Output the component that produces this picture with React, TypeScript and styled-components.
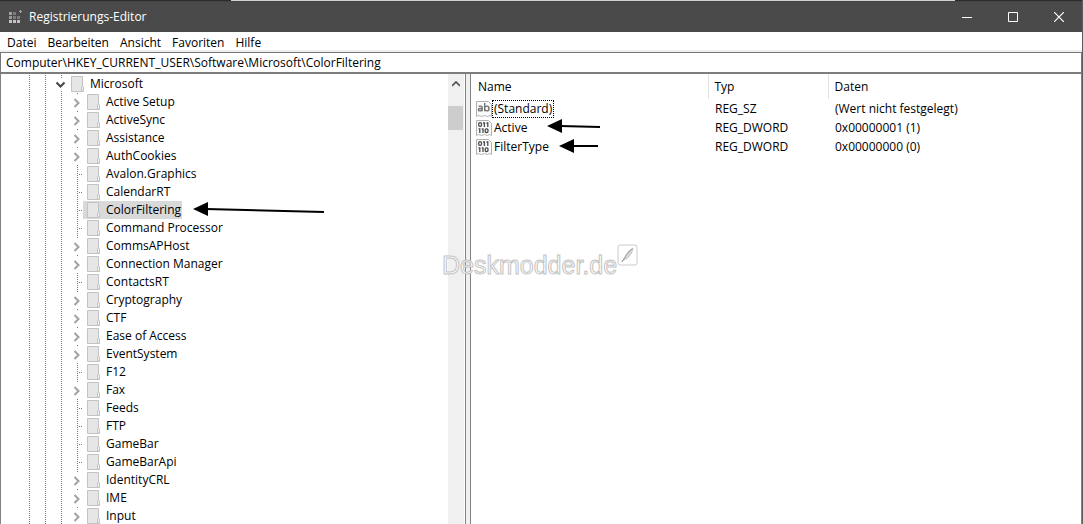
import React from 'react';
import styled, { createGlobalStyle, css } from 'styled-components';

const GlobalStyle = createGlobalStyle`
  * { box-sizing: border-box; }
  body { margin: 0; background: #fff; color: #000; font: 12px/18px "Open Sans", "Noto Sans", sans-serif; }
  button, input { font: inherit; color: inherit; }
  button { padding: 0; border: 0; background: none; }
`;

const Window = styled.div`
  position: relative;
  display: flex;
  flex-direction: column;
  height: 100vh;
  overflow: hidden;
  border-right: 1px solid #5c5c5c;
`;

const Backdrop = styled.div`
  flex: none;
  display: flex;
  height: 1px;
  background: #2b2b2b;
  &::before { content: ''; width: 231px; }
  &::after { content: ''; flex: 1; margin-right: 127px; background: #cfd3d1; }
`;

const TitleBar = styled.header`
  flex: none;
  display: flex;
  align-items: center;
  height: 31px;
  padding-left: 8px;
  border-top: 1px solid #444;
  background: #4a4a4a;
  color: #fff;
`;

const Title = styled.h1`
  flex: 1;
  margin: 0 0 0 7px;
  font-size: 12px;
  font-weight: 400;
`;

const CaptionButton = styled.button`
  display: flex;
  align-items: center;
  justify-content: center;
  width: 46px;
  height: 30px;
`;

const MenuBar = styled.nav`
  flex: none;
  display: flex;
  align-items: flex-end;
  gap: 11px;
  height: 20px;
  padding-left: 7px;
  background: linear-gradient(#fff 18px, #f0f0f0 18px);
`;

const AddressInput = styled.input`
  flex: none;
  width: 100%;
  height: 22px;
  padding: 0 5px;
  border: 1px solid #777;
  border-bottom: 2px solid #7d7d7d;
  outline: 0;
`;

const Panes = styled.main`
  flex: 1;
  display: flex;
  min-height: 0;
  border-left: 1px solid #828282;
  border-right: 1px solid #828282;
`;

const TreePane = styled.section`
  flex: none;
  display: flex;
  width: 465px;
  overflow: hidden;
  border-right: 1px solid #828282;
`;

const Tree = styled.ul`
  flex: 1;
  margin: 0;
  padding: 1px 0 0;
  list-style: none;
`;

const TreeRow = styled.li`
  display: flex;
  height: 18px;
`;

const Guides = styled.svg`
  flex: none;
  display: block;
`;

const NodeLabel = styled.button<{ $selected?: boolean }>`
  display: flex;
  align-items: center;
  gap: 6px;
  height: 18px;
  padding: 0 1px 0 4px;
  ${p => p.$selected && css`background: #d9d9d9;`}
`;

const ScrollBar = styled.div`
  flex: none;
  width: 17px;
  border-right: 1px solid #fff;
  background: #f0f0f0;
`;

const ScrollButton = styled.button`
  display: flex;
  align-items: center;
  justify-content: center;
  width: 16px;
  height: 20px;
  margin-bottom: 12px;
`;

const Thumb = styled.div`
  width: 15px;
  height: 24px;
  background: #cdcdcd;
`;

const Splitter = styled.div`
  flex: none;
  width: 5px;
  border-right: 1px solid #828282;
  background: #f0f0f0;
`;

const ValuePane = styled.section`
  flex: 1;
  min-width: 0;
  overflow: hidden;
`;

const ValueTable = styled.table`
  width: 100%;
  table-layout: fixed;
  border-collapse: collapse;
  white-space: nowrap;
`;

const HeadCell = styled.th<{ $width?: number }>`
  width: ${p => (p.$width ? `${p.$width}px` : 'auto')};
  height: 25px;
  padding: 0 7px;
  font-weight: 400;
  text-align: left;
  & + & { padding-left: 6px; border-left: 1px solid #e2e2e2; }
`;

const Cell = styled.td`
  height: 19px;
  padding: 0 7px;
`;

const NameCell = styled.td`
  height: 19px;
  padding: 0 5px;
`;

const ValueName = styled.div`
  display: flex;
  align-items: center;
`;

const ValueLabel = styled.span<{ $focused?: boolean }>`
  height: 18px;
  padding: 0 1px;
  border: 1px dotted ${p => (p.$focused ? '#000' : 'transparent')};
  line-height: 16px;
`;

const Pointer = styled.svg<{ $left: number; $top: number }>`
  position: absolute;
  left: ${p => p.$left}px;
  top: ${p => p.$top}px;
  pointer-events: none;
`;

const Watermark = styled.div`
  position: absolute;
  left: 442px;
  top: 244px;
  display: flex;
  align-items: flex-start;
  color: rgba(255, 255, 255, 0.75);
  font: 25px/42px "Liberation Sans", sans-serif;
  -webkit-text-stroke: 1px #c4c4c4;
  pointer-events: none;
`;

const AppIcon = () => (
  <svg width="14" height="14" viewBox="0 0 14 14" aria-hidden="true">
    <path fill="#a2a2a2" d="M1 2h3v3H1z" />
    <path fill="#7c7c7c" d="M5 2h3v3H5zM5 6h3v3H5zM9 6h3v3H9z" />
    <path fill="#999" d="M1 6h3v3H1z" />
    <path fill="#c2c2c2" d="M1 10h3v3H1zM5 10h3v3H5zM9 10h3v3H9z" />
    <path fill="#a6a6a6" d="M12 0h1v1h1v1h-1v1h-1V2h-1V1h1z" />
  </svg>
);

const Folder = () => (
  <svg width="13" height="16" viewBox="0 0 13 16" aria-hidden="true">
    <path d="M.5.5h11v10l1 1v4H.5z" fill="#e6e6e6" stroke="#c3c3c3" />
    <path d="M10.5 15v-4l1-1 1 1v4z" fill="#f4f4f4" stroke="#c3c3c3" />
  </svg>
);

const Page = () => (
  <path d="M.5.5h12l3 3v12l-2-1-2 1-3-1-3 1-3-1-2 1z" fill="#fbfbfb" stroke="#b0b0b0" />
);

const StringIcon = () => (
  <svg width="16" height="16" viewBox="0 0 16 16" aria-hidden="true">
    <Page />
    <g fill="none" stroke="#707070" strokeWidth="1.4">
      <path d="M2.5 5.1h2.6q1 0 1 1v4.2M6 7.500H3.600q-1.200 0-1.200 1.200 0 1.200 1.200 1.200Q5 9.900 6 8.900" />
      <path d="M8.700 2v8.300M8.700 6.500q.8-1.400 2.300-1.400 2 0 2 2.400t-2 2.400q-1.500 0-2.300-1.400" />
    </g>
  </svg>
);

const BinaryIcon = () => (
  <svg width="16" height="16" viewBox="0 0 16 16" aria-hidden="true">
    <Page />
    <g fill="none" stroke="#4a4a4a" strokeWidth="1.300">
      <rect x="2.700" y="2.700" width="2.800" height="3.600" rx="1.200" />
      <path d="M7 3h1.400v3.900M10.400 3h1.400v3.900" />
      <path d="M2.500 8.800h1.300v4.100M5.700 8.800H7v4.100" />
      <rect x="9.200" y="8.900" width="2.800" height="3.600" rx="1.200" />
    </g>
  </svg>
);

type Branch = 'root' | 'closed' | 'leaf';

const TreeGuides = ({ branch }: { branch: Branch }) => {
  const root = branch === 'root';
  return (
    <Guides width={root ? 66 : 82} height="18" aria-hidden="true">
      <g stroke="#777" strokeDasharray="1 1" fill="none">
        <path d="M28.500 0v18M44.500 0v18" />
        {root ? <path d="M60.500 0v4M60.500 16v2" /> : <path d="M60.500 0v18" />}
        {branch === 'leaf' && <path d="M76.500 0v18M78 9.500h5" />}
        {branch === 'closed' && <path d="M76.500 0v2" />}
      </g>
      {root && <path d="M55.500 7.500l4 4 4-4" fill="none" stroke="#444" strokeWidth="2" />}
      {branch === 'closed' && <path d="M73.500 6l4 4-4 4" fill="none" stroke="#a2a2a2" strokeWidth="2" />}
    </Guides>
  );
};

const keys: [string, Branch][] = [
  ['Microsoft', 'root'],
  ['Active Setup', 'closed'],
  ['ActiveSync', 'closed'],
  ['Assistance', 'closed'],
  ['AuthCookies', 'closed'],
  ['Avalon.Graphics', 'leaf'],
  ['CalendarRT', 'leaf'],
  ['ColorFiltering', 'leaf'],
  ['Command Processor', 'leaf'],
  ['CommsAPHost', 'closed'],
  ['Connection Manager', 'closed'],
  ['ContactsRT', 'leaf'],
  ['Cryptography', 'closed'],
  ['CTF', 'closed'],
  ['Ease of Access', 'closed'],
  ['EventSystem', 'closed'],
  ['F12', 'leaf'],
  ['Fax', 'closed'],
  ['Feeds', 'leaf'],
  ['FTP', 'leaf'],
  ['GameBar', 'leaf'],
  ['GameBarApi', 'leaf'],
  ['IdentityCRL', 'closed'],
  ['IME', 'closed'],
  ['Input', 'closed'],
];

const values = [
  { name: '(Standard)', type: 'REG_SZ', data: '(Wert nicht festgelegt)' },
  { name: 'Active', type: 'REG_DWORD', data: '0x00000001 (1)' },
  { name: 'FilterType', type: 'REG_DWORD', data: '0x00000000 (0)' },
];

const Arrow = ({ left, top, length, drop }: { left: number; top: number; length: number; drop: number }) => (
  <Pointer $left={left} $top={top} width={length} height="16" aria-hidden="true">
    <path d="M0 7L15 0v14z" />
    <path d={`M13 7L${length} ${7 + drop}`} stroke="#000" strokeWidth="2" />
  </Pointer>
);

export default function App() {
  return (
    <>
      <GlobalStyle />
      <Window>
        <Backdrop />
        <TitleBar>
          <AppIcon />
          <Title>Registrierungs-Editor</Title>
          <CaptionButton aria-label="Minimieren">
            <svg width="10" height="10"><path d="M0 5.500h10" stroke="#fff" /></svg>
          </CaptionButton>
          <CaptionButton aria-label="Maximieren">
            <svg width="10" height="10"><path d="M.5.5h9v9h-9z" fill="none" stroke="#fff" /></svg>
          </CaptionButton>
          <CaptionButton aria-label="Schließen">
            <svg width="10" height="10"><path d="M0 0l10 10M10 0L0 10" stroke="#fff" strokeWidth="1.200" /></svg>
          </CaptionButton>
        </TitleBar>
        <MenuBar>
          {['Datei', 'Bearbeiten', 'Ansicht', 'Favoriten', 'Hilfe'].map(item => (
            <button key={item}>{item}</button>
          ))}
        </MenuBar>
        <AddressInput aria-label="Adresse" defaultValue={'Computer\\HKEY_CURRENT_USER\\Software\\Microsoft\\ColorFiltering'} />
        <Panes>
          <TreePane>
            <Tree>
              {keys.map(([name, branch]) => (
                <TreeRow key={name}>
                  <TreeGuides branch={branch} />
                  <NodeLabel $selected={name === 'ColorFiltering'}>
                    <Folder />
                    {name}
                  </NodeLabel>
                </TreeRow>
              ))}
            </Tree>
            <ScrollBar>
              <ScrollButton aria-label="Nach oben">
                <svg width="8" height="6"><path d="M0 5l4-4 4 4" fill="none" stroke="#505050" strokeWidth="1.700" /></svg>
              </ScrollButton>
              <Thumb />
            </ScrollBar>
          </TreePane>
          <Splitter />
          <ValuePane>
            <ValueTable>
              <thead>
                <tr>
                  <HeadCell $width={237}>Name</HeadCell>
                  <HeadCell $width={120}>Typ</HeadCell>
                  <HeadCell>Daten</HeadCell>
                </tr>
              </thead>
              <tbody>
                {values.map((value, i) => (
                  <tr key={value.name}>
                    <NameCell>
                      <ValueName>
                        {value.type === 'REG_SZ' ? <StringIcon /> : <BinaryIcon />}
                        <ValueLabel $focused={i === 0}>{value.name}</ValueLabel>
                      </ValueName>
                    </NameCell>
                    <Cell>{value.type}</Cell>
                    <Cell>{value.data}</Cell>
                  </tr>
                ))}
              </tbody>
            </ValueTable>
          </ValuePane>
        </Panes>
        <Arrow left={193} top={202} length={131} drop={3} />
        <Arrow left={547} top={119} length={53} drop={1} />
        <Arrow left={559} top={139} length={39} drop={0} />
        <Watermark>
          Deskmodder.de
          <svg width="21" height="22" viewBox="0 0 21 22" aria-hidden="true">
            <rect x="1" y="1" width="19" height="20" rx="2" fill="#fff" stroke="#ccc" />
            <path d="M5 18l3-5q3-7 8-9-1 7-7 11l-3 1z" fill="#ddd" stroke="#aaa" strokeWidth=".7" />
            <path d="M5 18q4-8 10-13" fill="none" stroke="#888" strokeWidth=".7" />
          </svg>
        </Watermark>
      </Window>
    </>
  );
}
